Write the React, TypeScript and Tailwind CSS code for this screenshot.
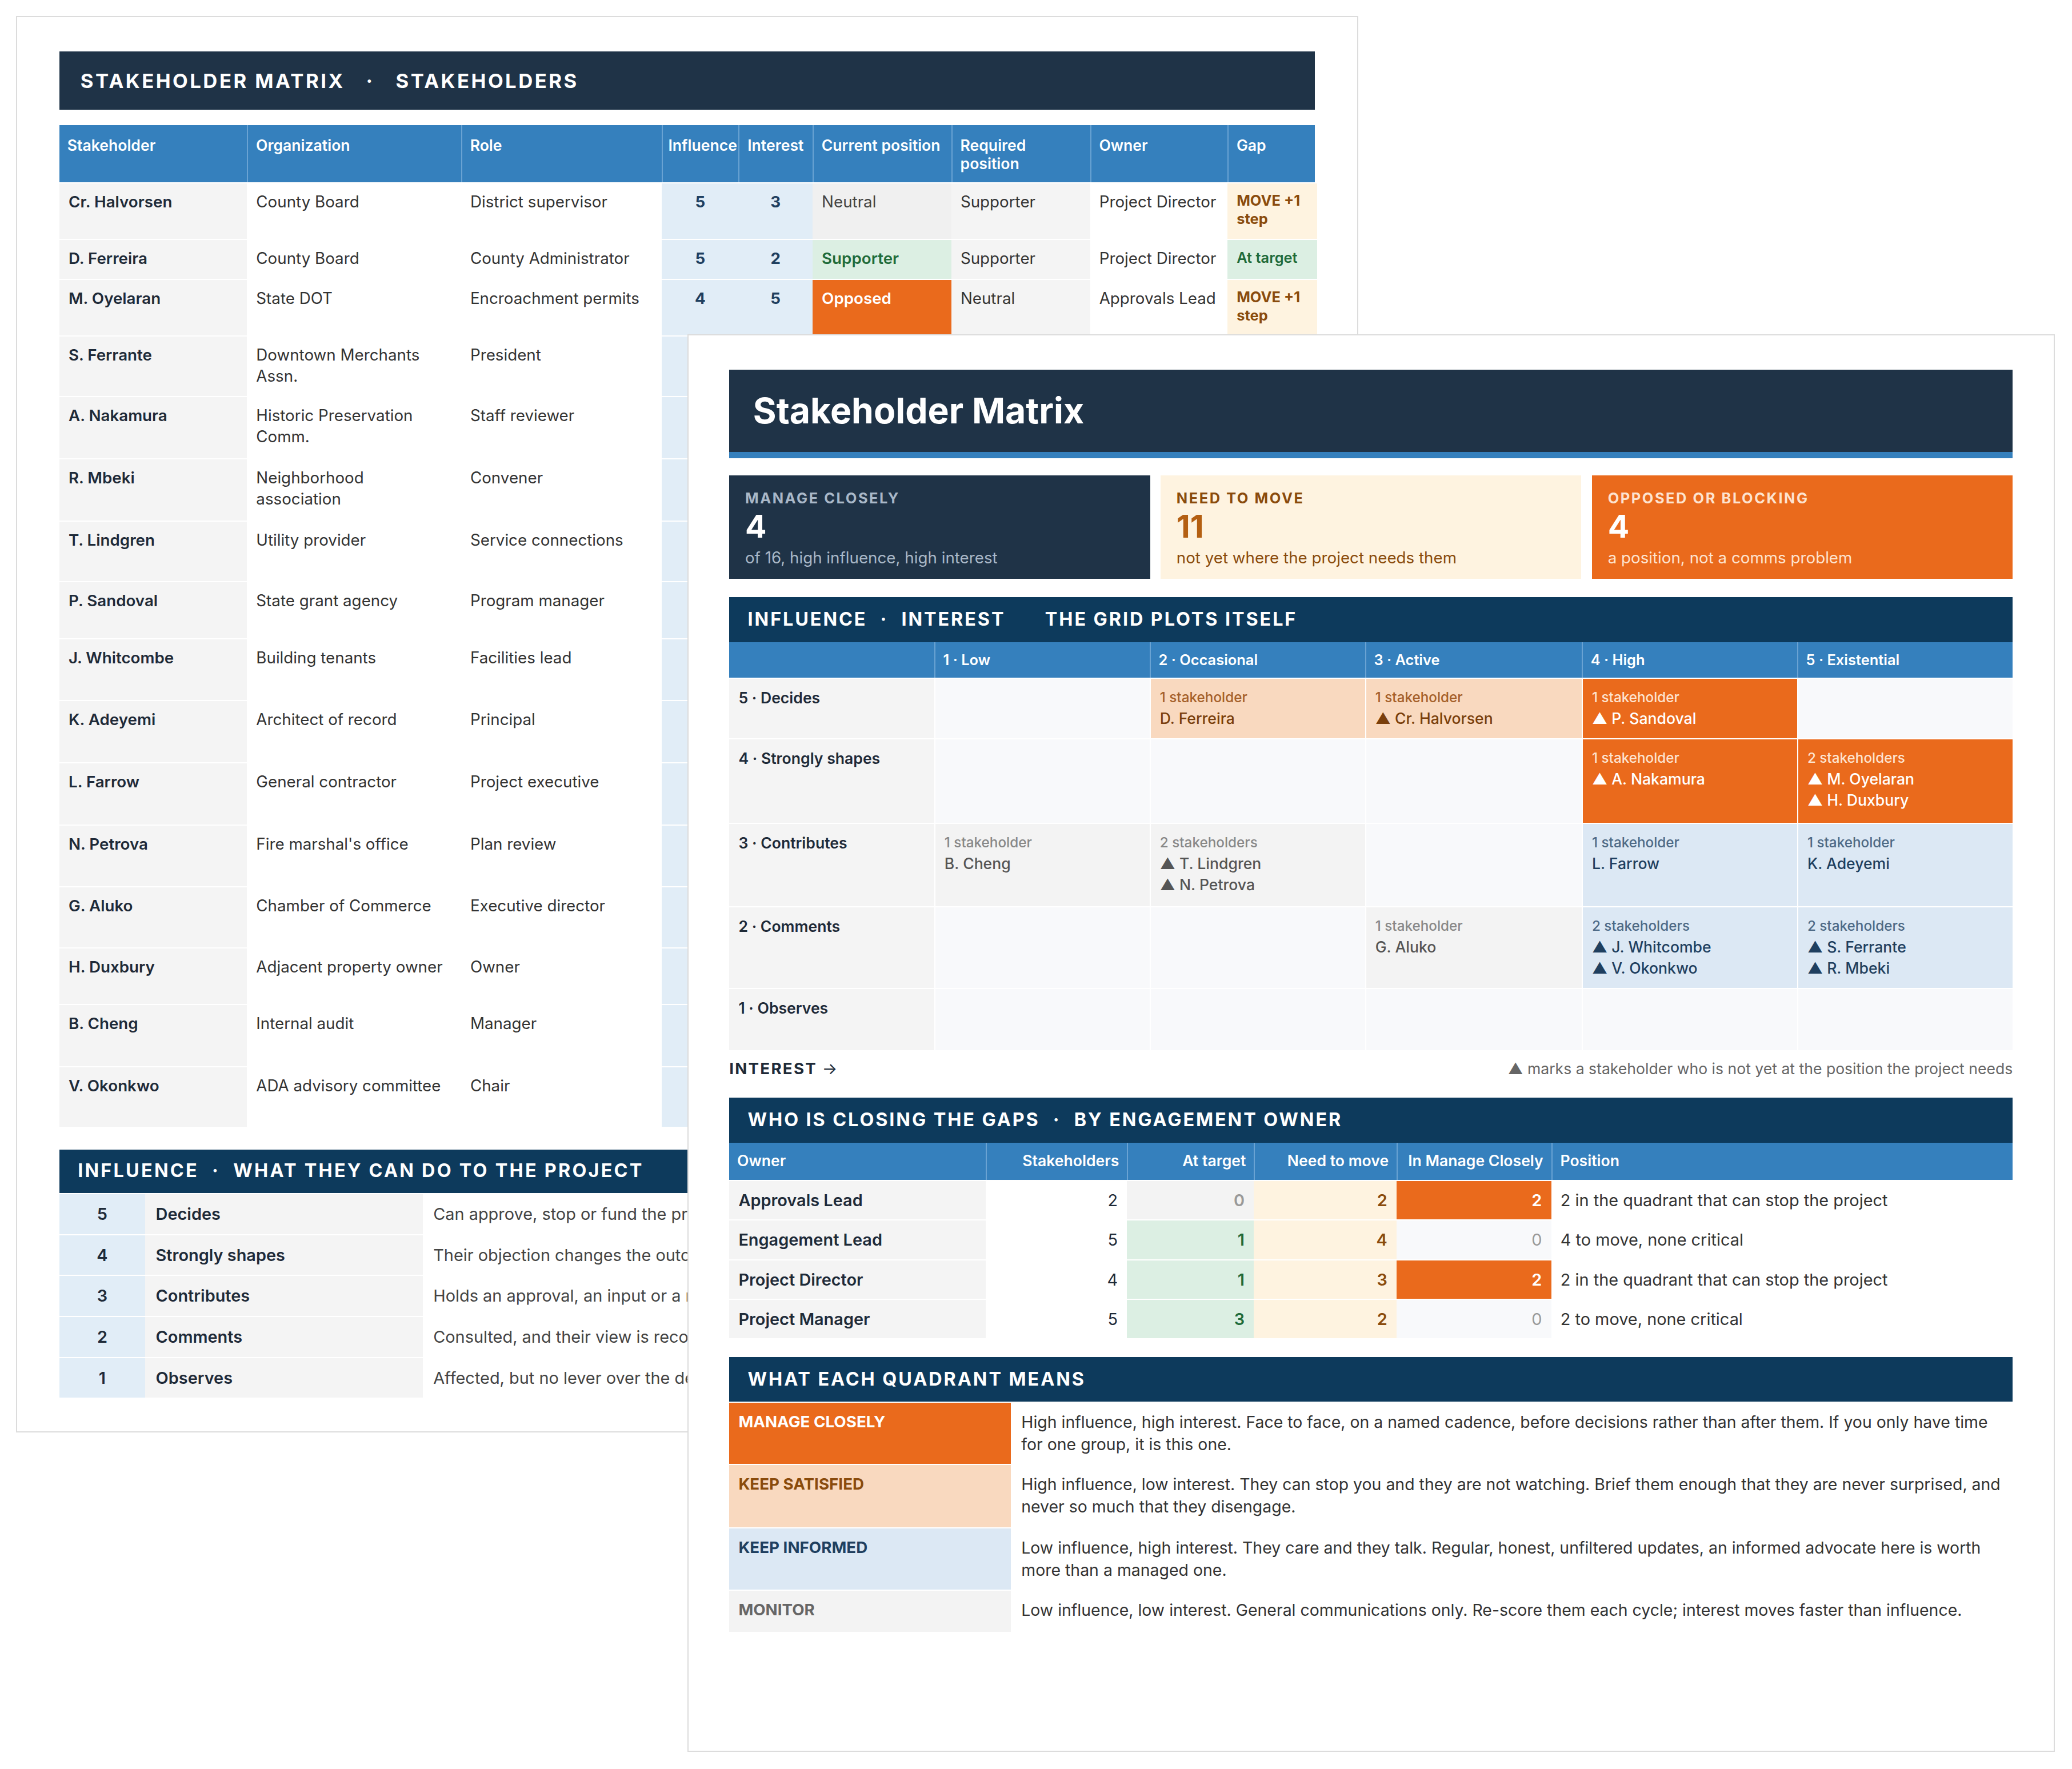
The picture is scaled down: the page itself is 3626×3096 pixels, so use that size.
import React from "react";

const F = { fontFamily: "Inter, 'Noto Sans', sans-serif" };

type Row = [string, string, string, number, number, string, string, string, string, number];
const rows: Row[] = [
  ["Cr. Halvorsen", "County Board", "District supervisor", 5, 3, "Neutral", "Supporter", "Project Director", "move", 43],
  ["D. Ferreira", "County Board", "County Administrator", 5, 2, "Supporter", "Supporter", "Project Director", "at", 30],
  ["M. Oyelaran", "State DOT", "Encroachment permits", 4, 5, "Opposed", "Neutral", "Approvals Lead", "move", 43],
  ["S. Ferrante", "Downtown Merchants Assn.", "President", 2, 5, "Neutral", "Supporter", "Engagement Lead", "move", 46],
  ["A. Nakamura", "Historic Preservation Comm.", "Staff reviewer", 4, 4, "Opposed", "Neutral", "Approvals Lead", "move", 47],
  ["R. Mbeki", "Neighborhood association", "Convener", 2, 5, "Neutral", "Supporter", "Engagement Lead", "move", 47],
  ["T. Lindgren", "Utility provider", "Service connections", 3, 2, "Neutral", "Supporter", "Project Manager", "move", 46],
  ["P. Sandoval", "State grant agency", "Program manager", 5, 4, "Neutral", "Supporter", "Project Director", "move", 43],
  ["J. Whitcombe", "Building tenants", "Facilities lead", 2, 4, "Neutral", "Supporter", "Engagement Lead", "move", 47],
  ["K. Adeyemi", "Architect of record", "Principal", 3, 5, "Supporter", "Supporter", "Project Manager", "at", 47],
  ["L. Farrow", "General contractor", "Project executive", 3, 4, "Supporter", "Supporter", "Project Manager", "at", 47],
  ["N. Petrova", "Fire marshal's office", "Plan review", 3, 2, "Neutral", "Supporter", "Approvals Lead", "move", 47],
  ["G. Aluko", "Chamber of Commerce", "Executive director", 2, 3, "Supporter", "Supporter", "Engagement Lead", "at", 46],
  ["H. Duxbury", "Adjacent property owner", "Owner", 4, 5, "Opposed", "Neutral", "Project Director", "move", 43],
  ["B. Cheng", "Internal audit", "Manager", 3, 1, "Supporter", "Supporter", "Project Manager", "at", 47],
  ["V. Okonkwo", "ADA advisory committee", "Chair", 2, 4, "Neutral", "Supporter", "Engagement Lead", "move", 46],
];

const cols = "grid-cols-[142px_162px_152px_58px_56px_105px_105px_104px_68px]";

function BackSheet() {
  return (
    <div className="absolute left-[12px] top-[12px] w-[1016px] h-[1072px] bg-white border border-[#dcdcdc] pt-[26px] px-[32px]">
      <div className="h-[44px] bg-[#1f3347] flex items-center px-[16px] text-white font-bold text-[15px] tracking-[0.1em]">
        STAKEHOLDER MATRIX<span className="mx-[16px]">·</span>STAKEHOLDERS
      </div>
      <div className="mt-[12px] text-[12px]">
        <div className={`grid ${cols} h-[43px] bg-[#3580bd] text-white font-semibold text-[11.5px] leading-[14px]`}>
          {["Stakeholder", "Organization", "Role", "Influence", "Interest", "Current position", "Required position", "Owner", "Gap"].map((h, i) => (
            <div key={i} className={`pt-[8px] ${i === 3 ? "px-[4px]" : "px-[6px]"} border-l border-[#6aa3d3] first:border-l-0`}>{h}</div>
          ))}
        </div>
        {rows.map((r, i) => {
          const cur = r[5] === "Supporter" ? "bg-[#dcefe3] text-[#1f6b3a]" : r[5] === "Opposed" ? "bg-[#ea6a1c] text-white" : "bg-[#f0f0f0] text-[#444]";
          return (
            <div key={i} className={`grid ${cols} border-t border-white text-[#333] leading-[16px]`} style={{ height: r[9] }}>
              <div className="bg-[#f4f4f4] px-[7px] pt-[6px] font-semibold text-[#1e2a38]">{r[0]}</div>
              <div className="px-[7px] pt-[6px]">{r[1]}</div>
              <div className="px-[7px] pt-[6px]">{r[2]}</div>
              <div className="bg-[#e1edf7] text-center pt-[6px] font-bold text-[#1f3f5f]">{r[3]}</div>
              <div className="bg-[#e1edf7] text-center pt-[6px] font-bold text-[#1f3f5f]">{r[4]}</div>
              <div className={`${cur} px-[7px] pt-[6px] ${r[5] !== "Neutral" ? "font-semibold" : ""}`}>{r[5]}</div>
              <div className="bg-[#f4f4f4] px-[7px] pt-[6px]">{r[6]}</div>
              <div className="px-[7px] pt-[6px]">{r[7]}</div>
              {r[8] === "move" ? (
                <div className="bg-[#fef3e0] text-[#8a4b0c] font-bold text-[11px] px-[7px] pt-[6px] leading-[14px]">MOVE +1 step</div>
              ) : (
                <div className="bg-[#dcefe3] text-[#1f6b3a] font-semibold text-[11px] px-[7px] pt-[5px]">At target</div>
              )}
            </div>
          );
        })}
      </div>
      <div className="mt-[17px] h-[33px] bg-[#0d3a5c] flex items-center px-[14px] text-white font-bold text-[14px] tracking-[0.1em]">
        INFLUENCE<span className="mx-[10px]">·</span>WHAT THEY CAN DO TO THE PROJECT
      </div>
      {[
        ["5", "Decides", "Can approve, stop or fund the project outright."],
        ["4", "Strongly shapes", "Their objection changes the outcome of decisions."],
        ["3", "Contributes", "Holds an approval, an input or a resource."],
        ["2", "Comments", "Consulted, and their view is recorded."],
        ["1", "Observes", "Affected, but no lever over the decision."],
      ].map((r, i) => (
        <div key={i} className="grid grid-cols-[65px_210px_1fr] h-[31px] border-t border-white text-[12.5px] text-[#1e2a38] items-stretch">
          <div className="bg-[#e1edf7] flex items-center justify-center font-semibold">{r[0]}</div>
          <div className="bg-[#f4f4f4] flex items-center px-[8px] font-semibold">{r[1]}</div>
          <div className="flex items-center px-[8px] text-[#444] whitespace-nowrap">{r[2]}</div>
        </div>
      ))}
    </div>
  );
}

type Cell = null | { bg: string; lbl: string; txt: string; names: [boolean, string][] };
const O = "bg-[#ea6a1c]", P = "bg-[#f9d9bf]", B = "bg-[#dce8f4]", G = "bg-[#f3f3f3]";
const ot = { lbl: "text-[#fde3cf]", txt: "text-white" };
const pt = { lbl: "text-[#a5602a]", txt: "text-[#7a3f0c]" };
const bt = { lbl: "text-[#4e6a86]", txt: "text-[#1f3f5f]" };
const gt = { lbl: "text-[#888]", txt: "text-[#555]" };
const mk = (bg: string, t: { lbl: string; txt: string }, names: [boolean, string][]): Cell => ({ bg, lbl: t.lbl, txt: t.txt, names });

const grid: { label: string; h: number; cells: Cell[] }[] = [
  { label: "5 · Decides", h: 46, cells: [null, mk(P, pt, [[false, "D. Ferreira"]]), mk(P, pt, [[true, "Cr. Halvorsen"]]), mk(O, ot, [[true, "P. Sandoval"]]), null] },
  { label: "4 · Strongly shapes", h: 64, cells: [null, null, null, mk(O, ot, [[true, "A. Nakamura"]]), mk(O, ot, [[true, "M. Oyelaran"], [true, "H. Duxbury"]])] },
  { label: "3 · Contributes", h: 63, cells: [mk(G, gt, [[false, "B. Cheng"]]), mk(G, gt, [[true, "T. Lindgren"], [true, "N. Petrova"]]), null, mk(B, bt, [[false, "L. Farrow"]]), mk(B, bt, [[false, "K. Adeyemi"]])] },
  { label: "2 · Comments", h: 62, cells: [null, null, mk(G, gt, [[false, "G. Aluko"]]), mk(B, bt, [[true, "J. Whitcombe"], [true, "V. Okonkwo"]]), mk(B, bt, [[true, "S. Ferrante"], [true, "R. Mbeki"]])] },
  { label: "1 · Observes", h: 47, cells: [null, null, null, null, null] },
];

const gcols = "grid-cols-[155px_163px_163px_164px_163px_163px]";
const ocols = "grid-cols-[194px_107px_96px_108px_117px_1fr]";

function SecHead({ children }: { children: React.ReactNode }) {
  return <div className="h-[34px] bg-[#0d3a5c] flex items-center px-[14px] text-white font-bold text-[14px] tracking-[0.09em]">{children}</div>;
}

function FrontSheet() {
  return (
    <div className="absolute left-[520px] top-[253px] w-[1035px] h-[1073px] bg-white border border-[#dcdcdc] pt-[26px] px-[31px]">
      <div className="h-[62px] bg-[#1f3347] flex items-center px-[18px] text-white font-bold text-[27px]">Stakeholder Matrix</div>
      <div className="h-[5px] bg-[#3580bd]" />
      <div className="mt-[13px] grid grid-cols-3 gap-[8px] h-[78px]">
        {[
          ["MANAGE CLOSELY", "4", "of 16, high influence, high interest", "bg-[#1f3347]", "text-[#a9b8c8]", "text-white", "text-[#a9b8c8]"],
          ["NEED TO MOVE", "11", "not yet where the project needs them", "bg-[#fef3e0]", "text-[#8a4b0c]", "text-[#b45f12]", "text-[#8a4b0c]"],
          ["OPPOSED OR BLOCKING", "4", "a position, not a comms problem", "bg-[#ea6a1c]", "text-[#fde3cf]", "text-white", "text-[#fde3cf]"],
        ].map((k, i) => (
          <div key={i} className={`${k[3]} px-[12px] pt-[9px]`}>
            <div className={`${k[4]} text-[11px] font-bold tracking-[0.1em]`}>{k[0]}</div>
            <div className={`${k[5]} text-[24px] font-bold leading-[26px]`}>{k[1]}</div>
            <div className={`${k[6]} text-[12px] mt-[2px]`}>{k[2]}</div>
          </div>
        ))}
      </div>
      <div className="mt-[14px]">
        <SecHead>INFLUENCE<span className="mx-[10px]">·</span>INTEREST<span className="ml-[30px]">THE GRID PLOTS ITSELF</span></SecHead>
        <div className={`grid ${gcols} h-[27px] bg-[#3580bd] text-white font-semibold text-[11px]`}>
          {["", "1 · Low", "2 · Occasional", "3 · Active", "4 · High", "5 · Existential"].map((h, i) => (
            <div key={i} className="flex items-center px-[6px] border-l border-[#6aa3d3] first:border-l-0">{h}</div>
          ))}
        </div>
        {grid.map((r, i) => (
          <div key={i} className={`grid ${gcols} border-t border-white`} style={{ height: r.h }}>
            <div className="bg-[#f4f4f4] px-[7px] pt-[6px] text-[11.5px] font-semibold text-[#1e2a38]">{r.label}</div>
            {r.cells.map((c, j) =>
              c ? (
                <div key={j} className={`${c.bg} px-[7px] pt-[6px] border-l border-white leading-[16px]`}>
                  <div className={`${c.lbl} text-[10.5px] font-medium`}>{c.names.length} stakeholder{c.names.length > 1 ? "s" : ""}</div>
                  {c.names.map((n, k) => (
                    <div key={k} className={`${c.txt} text-[11.5px] font-medium`}>{n[0] ? "▲ " : ""}{n[1]}</div>
                  ))}
                </div>
              ) : (
                <div key={j} className="bg-[#f8f9fb] border-l border-white" />
              )
            )}
          </div>
        ))}
        <div className="flex justify-between items-center h-[26px] mt-[1px] text-[12px]">
          <span className="font-bold text-[#1e2a38] tracking-[0.08em]">INTEREST <span className="tracking-normal font-normal">→</span></span>
          <span className="text-[#666] text-[11.5px]">▲ marks a stakeholder who is not yet at the position the project needs</span>
        </div>
      </div>
      <div className="mt-[9px]">
        <SecHead>WHO IS CLOSING THE GAPS<span className="mx-[10px]">·</span>BY ENGAGEMENT OWNER</SecHead>
        <div className={`grid ${ocols} h-[28px] bg-[#3580bd] text-white font-semibold text-[11.5px]`}>
          {["Owner", "Stakeholders", "At target", "Need to move", "In Manage Closely", "Position"].map((h, i) => (
            <div key={i} className={`flex items-center px-[6px] border-l border-[#6aa3d3] first:border-l-0 ${i > 0 && i < 5 ? "justify-end" : ""}`}>{h}</div>
          ))}
        </div>
        {[
          ["Approvals Lead", 2, 0, 2, 2, "2 in the quadrant that can stop the project"],
          ["Engagement Lead", 5, 1, 4, 0, "4 to move, none critical"],
          ["Project Director", 4, 1, 3, 2, "2 in the quadrant that can stop the project"],
          ["Project Manager", 5, 3, 2, 0, "2 to move, none critical"],
        ].map((r, i) => (
          <div key={i} className={`grid ${ocols} h-[30px] border-t border-white text-[12.5px] text-[#1e2a38]`}>
            <div className="bg-[#f4f4f4] flex items-center px-[7px] font-semibold">{r[0]}</div>
            <div className="flex items-center justify-end px-[7px]">{r[1]}</div>
            <div className={`flex items-center justify-end px-[7px] font-semibold ${r[2] ? "bg-[#dcefe3] text-[#1f6b3a]" : "bg-[#f3f3f3] text-[#999] font-normal"}`}>{r[2]}</div>
            <div className="flex items-center justify-end px-[7px] bg-[#fef3e0] text-[#8a4b0c] font-semibold">{r[3]}</div>
            <div className={`flex items-center justify-end px-[7px] ${r[4] ? "bg-[#ea6a1c] text-white font-semibold" : "bg-[#f8f9fb] text-[#999]"}`}>{r[4]}</div>
            <div className="flex items-center px-[7px] text-[#333]">{r[5]}</div>
          </div>
        ))}
      </div>
      <div className="mt-[14px]">
        <SecHead>WHAT EACH QUADRANT MEANS</SecHead>
        {[
          ["MANAGE CLOSELY", "bg-[#ea6a1c] text-white", "High influence, high interest. Face to face, on a named cadence, before decisions rather than after them. If you only have time for one group, it is this one.", 47],
          ["KEEP SATISFIED", "bg-[#f9d9bf] text-[#8a4b0c]", "High influence, low interest. They can stop you and they are not watching. Brief them enough that they are never surprised, and never so much that they disengage.", 48],
          ["KEEP INFORMED", "bg-[#dce8f4] text-[#1f3f5f]", "Low influence, high interest. They care and they talk. Regular, honest, unfiltered updates, an informed advocate here is worth more than a managed one.", 47],
          ["MONITOR", "bg-[#f3f3f3] text-[#666]", "Low influence, low interest. General communications only. Re-score them each cycle; interest moves faster than influence.", 32],
        ].map((r, i) => (
          <div key={i} className="grid grid-cols-[213px_1fr] border-t border-white text-[12.3px] leading-[17px]" style={{ height: r[3] as number }}>
            <div className={`${r[1]} px-[7px] pt-[6px] font-bold text-[12px]`}>{r[0]}</div>
            <div className="px-[8px] pt-[6px] text-[#333]">{r[2]}</div>
          </div>
        ))}
      </div>
    </div>
  );
}

export default function App() {
  return (
    <div className="w-[3626px] h-[3096px] bg-white overflow-hidden" style={F}>
      <div className="relative w-[1568px] h-[1339px] [zoom:2.3125]">
        <BackSheet />
        <FrontSheet />
      </div>
    </div>
  );
}
